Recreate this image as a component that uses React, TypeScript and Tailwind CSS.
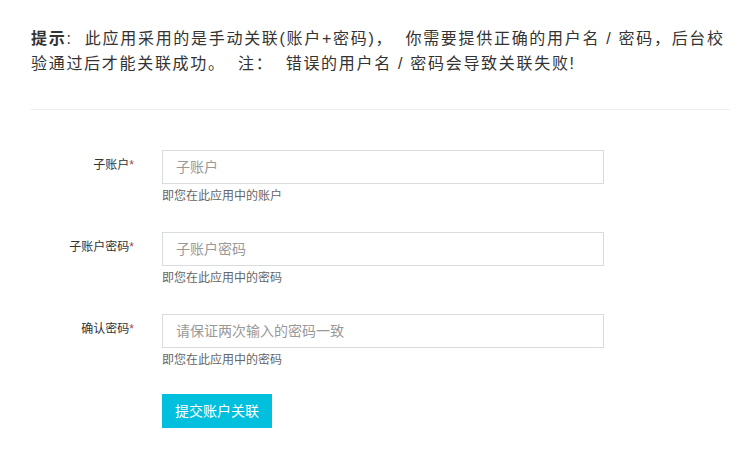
import React from 'react';

interface FieldProps {
  label: string;
  placeholder: string;
  help: string;
  type?: string;
}

function Field({ label, placeholder, help, type = 'text' }: FieldProps) {
  return (
    <div className="flex items-start">
      <label className="w-[103px] shrink-0 pt-[6px] text-right text-[12px] leading-[18px] text-[#333]">
        {label}
        <span className="text-[#a94442]">*</span>
      </label>
      <div className="ml-[28px]">
        <input
          type={type}
          placeholder={placeholder}
          className="block h-[34px] w-[442px] border border-[#d9dcde] bg-white px-[13px] text-[14px] text-[#333] outline-none placeholder:text-[#999]"
        />
        <p className="mt-[3px] text-[12px] leading-[18px] text-[#666]">{help}</p>
      </div>
    </div>
  );
}

export default function App() {
  return (
    <div
      className="min-h-screen bg-white pl-[31px] pr-[8px] pt-[26px]"
      style={{ fontFamily: '"Liberation Sans", "Noto Sans CJK SC", sans-serif' }}
    >
      <p className="text-[16px] leading-[25px] tracking-[1.7px] text-[#333]">
        <b className="font-bold">提示</b>:&nbsp; 此应用采用的是手动关联(账户+密码)，&nbsp; 你需要提供正确的用户名 / 密码，后台校验通过后才能关联成功。&nbsp; 注：&nbsp; 错误的用户名 / 密码会导致关联失败!
      </p>
      <div className="mt-[33px] border-t border-[#eeeeee]" />

      <form className="mt-[40px] flex flex-col gap-[27px]" onSubmit={(e) => e.preventDefault()}>
        <Field label="子账户" placeholder="子账户" help="即您在此应用中的账户" />
        <Field label="子账户密码" placeholder="子账户密码" help="即您在此应用中的密码" type="password" />
        <Field
          label="确认密码"
          placeholder="请保证两次输入的密码一致"
          help="即您在此应用中的密码"
          type="password"
        />
        <div className="-mt-[2px] pl-[131px]">
          <button
            type="submit"
            className="h-[34px] w-[110px] bg-[#00c0de] text-[14px] text-white"
          >
            提交账户关联
          </button>
        </div>
      </form>
    </div>
  );
}
